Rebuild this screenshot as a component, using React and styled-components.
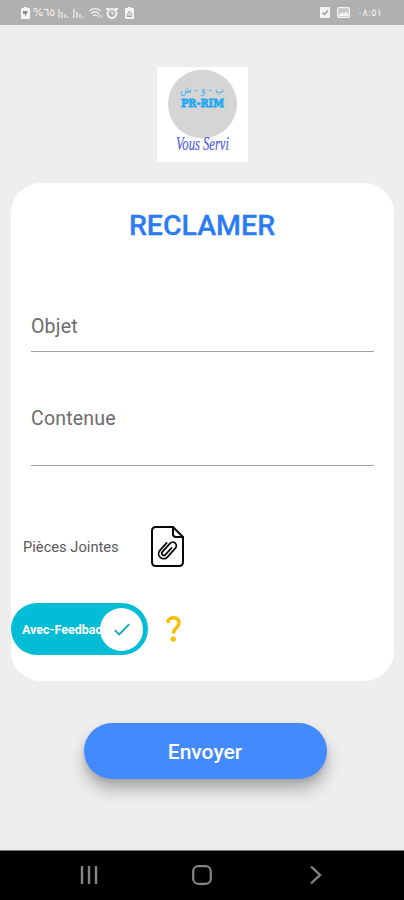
import React from "react";
import styled, { createGlobalStyle } from "styled-components";

const GlobalStyle = createGlobalStyle`
  * {
    box-sizing: border-box;
  }

  body {
    background-color: #eeeeee;
    font-family: Roboto, "DejaVu Sans", sans-serif;
    margin: 0;
  }
`;

const Screen = styled.div`
  display: flex;
  flex-direction: column;
  height: 900px;
  overflow: hidden;
  width: 404px;
`;

const StatusBar = styled.header`
  align-items: center;
  background-color: #b0b0b0;
  color: #f4f4f4;
  display: flex;
  flex: none;
  height: 25px;
  justify-content: space-between;
  padding: 0 22px 0 21px;
`;

const StatusGroup = styled.div`
  align-items: center;
  display: flex;
  gap: ${(props) => props.$gap};
`;

const StatusText = styled.span`
  direction: ltr;
  font-family: "DejaVu Sans", sans-serif;
  font-size: ${(props) => props.$size};
  line-height: 14px;
  unicode-bidi: isolate;
`;

const Icon = styled.svg`
  display: block;
  flex: none;
  overflow: visible;
`;

const Content = styled.main`
  align-items: center;
  display: flex;
  flex: 1;
  flex-direction: column;
  padding: 42px 10px 0 11px;
`;

const Logo = styled.div`
  background-color: #ffffff;
  height: 95px;
  margin-right: 1px;
  width: 91px;
`;

const Card = styled.section`
  background-color: #ffffff;
  border-radius: 30px;
  height: 498px;
  margin-top: 21px;
  width: 100%;
`;

const Title = styled.h1`
  color: #2b7bf3;
  font-size: 28.5px;
  font-weight: 500;
  line-height: 32px;
  margin: 0;
  padding: 27px 1px 0 0;
  text-align: center;
  -webkit-text-stroke: 0.3px #2b7bf3;
`;

const Field = styled.label`
  border-bottom: 1px solid #a2a2a2;
  color: #6c6c6c;
  display: block;
  font-size: 19.5px;
  height: ${(props) => props.$height};
  letter-spacing: ${(props) => props.$spacing};
  line-height: 24px;
  margin: ${(props) => props.$top} 20px 0;
`;

const AttachmentRow = styled.div`
  align-items: center;
  display: flex;
  gap: 32px;
  height: 42px;
  margin-top: 59px;
  padding-left: 12px;
`;

const AttachmentLabel = styled.span`
  color: #5a5a5a;
  font-size: 14.7px;
  padding-top: 1px;
  width: 96px;
  white-space: nowrap;
`;

const FeedbackRow = styled.div`
  align-items: center;
  display: flex;
  gap: 18px;
  margin-top: 36px;
`;

const Toggle = styled.button`
  align-items: center;
  background-color: #03bcd6;
  border: 0;
  border-radius: 27px;
  display: flex;
  height: 52px;
  padding: 0 5px 0 11px;
  width: 137px;
`;

// The label runs on under the knob, so only its start is seen.
const ToggleLabel = styled.span`
  color: #ffffff;
  flex: 1;
  font-family: Roboto, sans-serif;
  font-size: 12.5px;
  font-weight: 700;
  min-width: 0;
  text-align: left;
  white-space: nowrap;
`;

const ToggleText = styled.span`
  display: block;
  overflow: hidden;
  width: 82px;
`;

const Knob = styled.span`
  align-items: center;
  background-color: #ffffff;
  border-radius: 50%;
  display: flex;
  flex: none;
  height: 43px;
  justify-content: center;
  position: relative;
  width: 43px;
`;

const SendButton = styled.button`
  background-color: #448aff;
  border: 0;
  border-radius: 28px;
  box-shadow: 0 11px 16px rgba(0, 0, 0, 0.26), 0 3px 6px rgba(0, 0, 0, 0.1);
  color: #ffffff;
  font-family: Roboto, sans-serif;
  font-size: 21px;
  font-weight: 500;
  height: 56px;
  margin-top: 42px;
  margin-left: 5px;
  padding-top: 3px;
  width: 243px;
`;

const NavBar = styled.nav`
  align-items: center;
  background-color: #000000;
  border-top: 1px solid #777777;
  display: flex;
  flex: none;
  height: 50px;
  justify-content: space-between;
  padding: 0 78px 2px;
`;

const BatteryIcon = () => (
  <Icon width="9" height="12" viewBox="0 0 9 12">
    <path d="M3 0h3v1h2a1 1 0 0 1 1 1v9a1 1 0 0 1-1 1H1a1 1 0 0 1-1-1V2a1 1 0 0 1 1-1h2z" fill="#f4f4f4" />
    <path d="M2 4h5L4 10V7H2z" fill="#8e8e8e" />
  </Icon>
);

const SignalIcon = () => (
  <Icon width="12" height="12" viewBox="0 0 12 12" stroke="#e4e4e4" strokeWidth="1.5">
    <path d="M1 2v9M4 5v6M7 7v4M10 9.5V11" />
  </Icon>
);

const WifiIcon = () => (
  <Icon width="15" height="12" viewBox="0 0 15 12" fill="none" stroke="#ededed" strokeWidth="1.4">
    <path d="M1 4Q7-1 13 4M3 6.5Q7 3 11 6.5M5 9Q7 7 9 9" />
    <path d="M11 11V7M14 11V8" strokeWidth="1" />
  </Icon>
);

const AlarmIcon = () => (
  <Icon width="12" height="12" viewBox="0 0 12 12">
    <path d="M0 1h3v2H0zM9 1h3v2H9z" fill="#f4f4f4" />
    <circle cx="6" cy="6.5" r="4.4" fill="#b0b0b0" stroke="#f4f4f4" strokeWidth="2" />
    <path d="M6 4v3h2" fill="none" stroke="#f4f4f4" strokeWidth="1" />
  </Icon>
);

const RecycleBatteryIcon = () => (
  <Icon width="15" height="12" viewBox="-4 0 15 12">
    <path d="M3 0h3v1h2a1 1 0 0 1 1 1v9a1 1 0 0 1-1 1H1a1 1 0 0 1-1-1V2a1 1 0 0 1 1-1h2z" fill="#f4f4f4" />
    <path d="M2 8l2.5-4L7 8zM2 9.5h5" fill="none" stroke="#a0a0a0" />
  </Icon>
);

const CheckboxIcon = () => (
  <Icon width="10" height="11" viewBox="0 0 10 11">
    <rect width="10" height="11" rx="1" fill="#f4f4f4" />
    <path d="M2.5 5.5l2 2 3.5-4" fill="none" stroke="#929292" strokeWidth="1.2" />
  </Icon>
);

const PhotoIcon = () => (
  <Icon width="13" height="11" viewBox="0 0 13 11">
    <rect x="0.7" y="0.7" width="11.6" height="9.6" rx="1" fill="#c5c5c5" stroke="#f4f4f4" strokeWidth="1.3" />
    <path d="M1 9l4-4 2 2 2-3 3 5z" fill="#f4f4f4" />
  </Icon>
);

const LogoMark = () => (
  <Icon width="91" height="95" viewBox="0 0 91 95">
    <circle cx="45.5" cy="37" r="34.5" fill="#d5d5d5" />
    <text
      x="45"
      y="26"
      fill="#45b4ea"
      fontFamily="DejaVu Sans, sans-serif"
      fontSize="11"
      textAnchor="middle"
      direction="rtl"
      textLength="44"
      lengthAdjust="spacingAndGlyphs"
    >
      ب - و - ش
    </text>
    <text
      x="24"
      y="39.5"
      fill="#25aaf0"
      stroke="#25aaf0"
      strokeWidth="0.9"
      fontFamily="DejaVu Serif, serif"
      fontSize="10.5"
      fontWeight="700"
      textLength="43"
      lengthAdjust="spacingAndGlyphs"
    >
      PR-RIM
    </text>
    <text
      x="19"
      y="83"
      fill="#5260d8"
      stroke="#5260d8"
      strokeWidth="0.2"
      fontFamily="Liberation Serif, serif"
      fontSize="18"
      fontStyle="italic"
      textLength="53"
      lengthAdjust="spacingAndGlyphs"
    >
      Vous Servi
    </text>
  </Icon>
);

const AttachmentIcon = () => (
  <Icon
    width="33"
    height="41"
    viewBox="0 0 33 41"
    fill="none"
    stroke="#080808"
    strokeWidth="2"
    strokeLinecap="round"
    strokeLinejoin="round"
  >
    <path d="M22 1H5Q1 1 1 5V36Q1 40 5 40H28Q32 40 32 36V11Z" />
    <path d="M22 1V8Q22 11 25 11H32" />
    <path
      d="M11 19V29A5 5 0 0 0 21 29V17A3.6 3.6 0 0 0 13.8 17V28.5A2.1 2.1 0 0 0 18 28.5V19.5"
      strokeWidth="1.8"
      transform="rotate(42 16 24)"
    />
  </Icon>
);

const CheckIcon = () => (
  <Icon width="16" height="13" viewBox="0 0 16 13" fill="none" stroke="#12a6bd" strokeWidth="1.8">
    <path d="M0.8 7.2L5.2 11.4L15.2 1.2" />
  </Icon>
);

const QuestionIcon = () => (
  <Icon width="15" height="26" viewBox="0 0 15 26">
    <path
      d="M1.8 7Q2.2 1.8 7.4 1.8Q13 1.8 13 7Q13 9.4 10.5 11.7Q7.5 14.2 7.5 17.5"
      fill="none"
      stroke="#fbbc05"
      strokeWidth="3.4"
    />
    <circle cx="7.3" cy="23" r="2.6" fill="#fbbc05" />
  </Icon>
);

const RecentsIcon = () => (
  <Icon width="21" height="20" viewBox="0 0 21 20" stroke="#858585" strokeWidth="2.4">
    <path d="M4 1v18M11 1v18M18 1v18" />
  </Icon>
);

const HomeIcon = () => (
  <Icon width="20" height="20" viewBox="0 0 20 20" fill="none" stroke="#858585" strokeWidth="2.2">
    <rect x="1.2" y="1.2" width="17.6" height="17.6" rx="5" />
  </Icon>
);

const BackIcon = () => (
  <Icon width="21" height="20" viewBox="-5 0 21 20" fill="none" stroke="#858585" strokeWidth="2.4">
    <path d="M1 1.5L10 10L1 18.5" />
  </Icon>
);

const App = () => {
  return (
    <>
      <GlobalStyle />
      <Screen>
        <StatusBar>
          <StatusGroup $gap="3px">
            <BatteryIcon />
            <StatusText $size="11px">%٦٥</StatusText>
            <SignalIcon />
            <SignalIcon />
            <WifiIcon />
            <AlarmIcon />
            <RecycleBatteryIcon />
          </StatusGroup>
          <StatusGroup $gap="7px">
            <CheckboxIcon />
            <PhotoIcon />
            <StatusText $size="10px">٠٨:٥١</StatusText>
          </StatusGroup>
        </StatusBar>

        <Content>
          <Logo>
            <LogoMark />
          </Logo>

          <Card>
            <Title>RECLAMER</Title>
            <Field $top="73px" $height="37px" $spacing="0.2px">
              Objet
            </Field>
            <Field $top="55px" $height="59px" $spacing="0.2px">
              Contenue
            </Field>

            <AttachmentRow>
              <AttachmentLabel>Pièces Jointes</AttachmentLabel>
              <AttachmentIcon />
            </AttachmentRow>

            <FeedbackRow>
              <Toggle type="button">
                <ToggleLabel>
                  <ToggleText>Avec-Feedback</ToggleText>
                </ToggleLabel>
                <Knob>
                  <CheckIcon />
                </Knob>
              </Toggle>
              <QuestionIcon />
            </FeedbackRow>
          </Card>

          <SendButton type="button">Envoyer</SendButton>
        </Content>

        <NavBar>
          <RecentsIcon />
          <HomeIcon />
          <BackIcon />
        </NavBar>
      </Screen>
    </>
  );
};

export default App;
